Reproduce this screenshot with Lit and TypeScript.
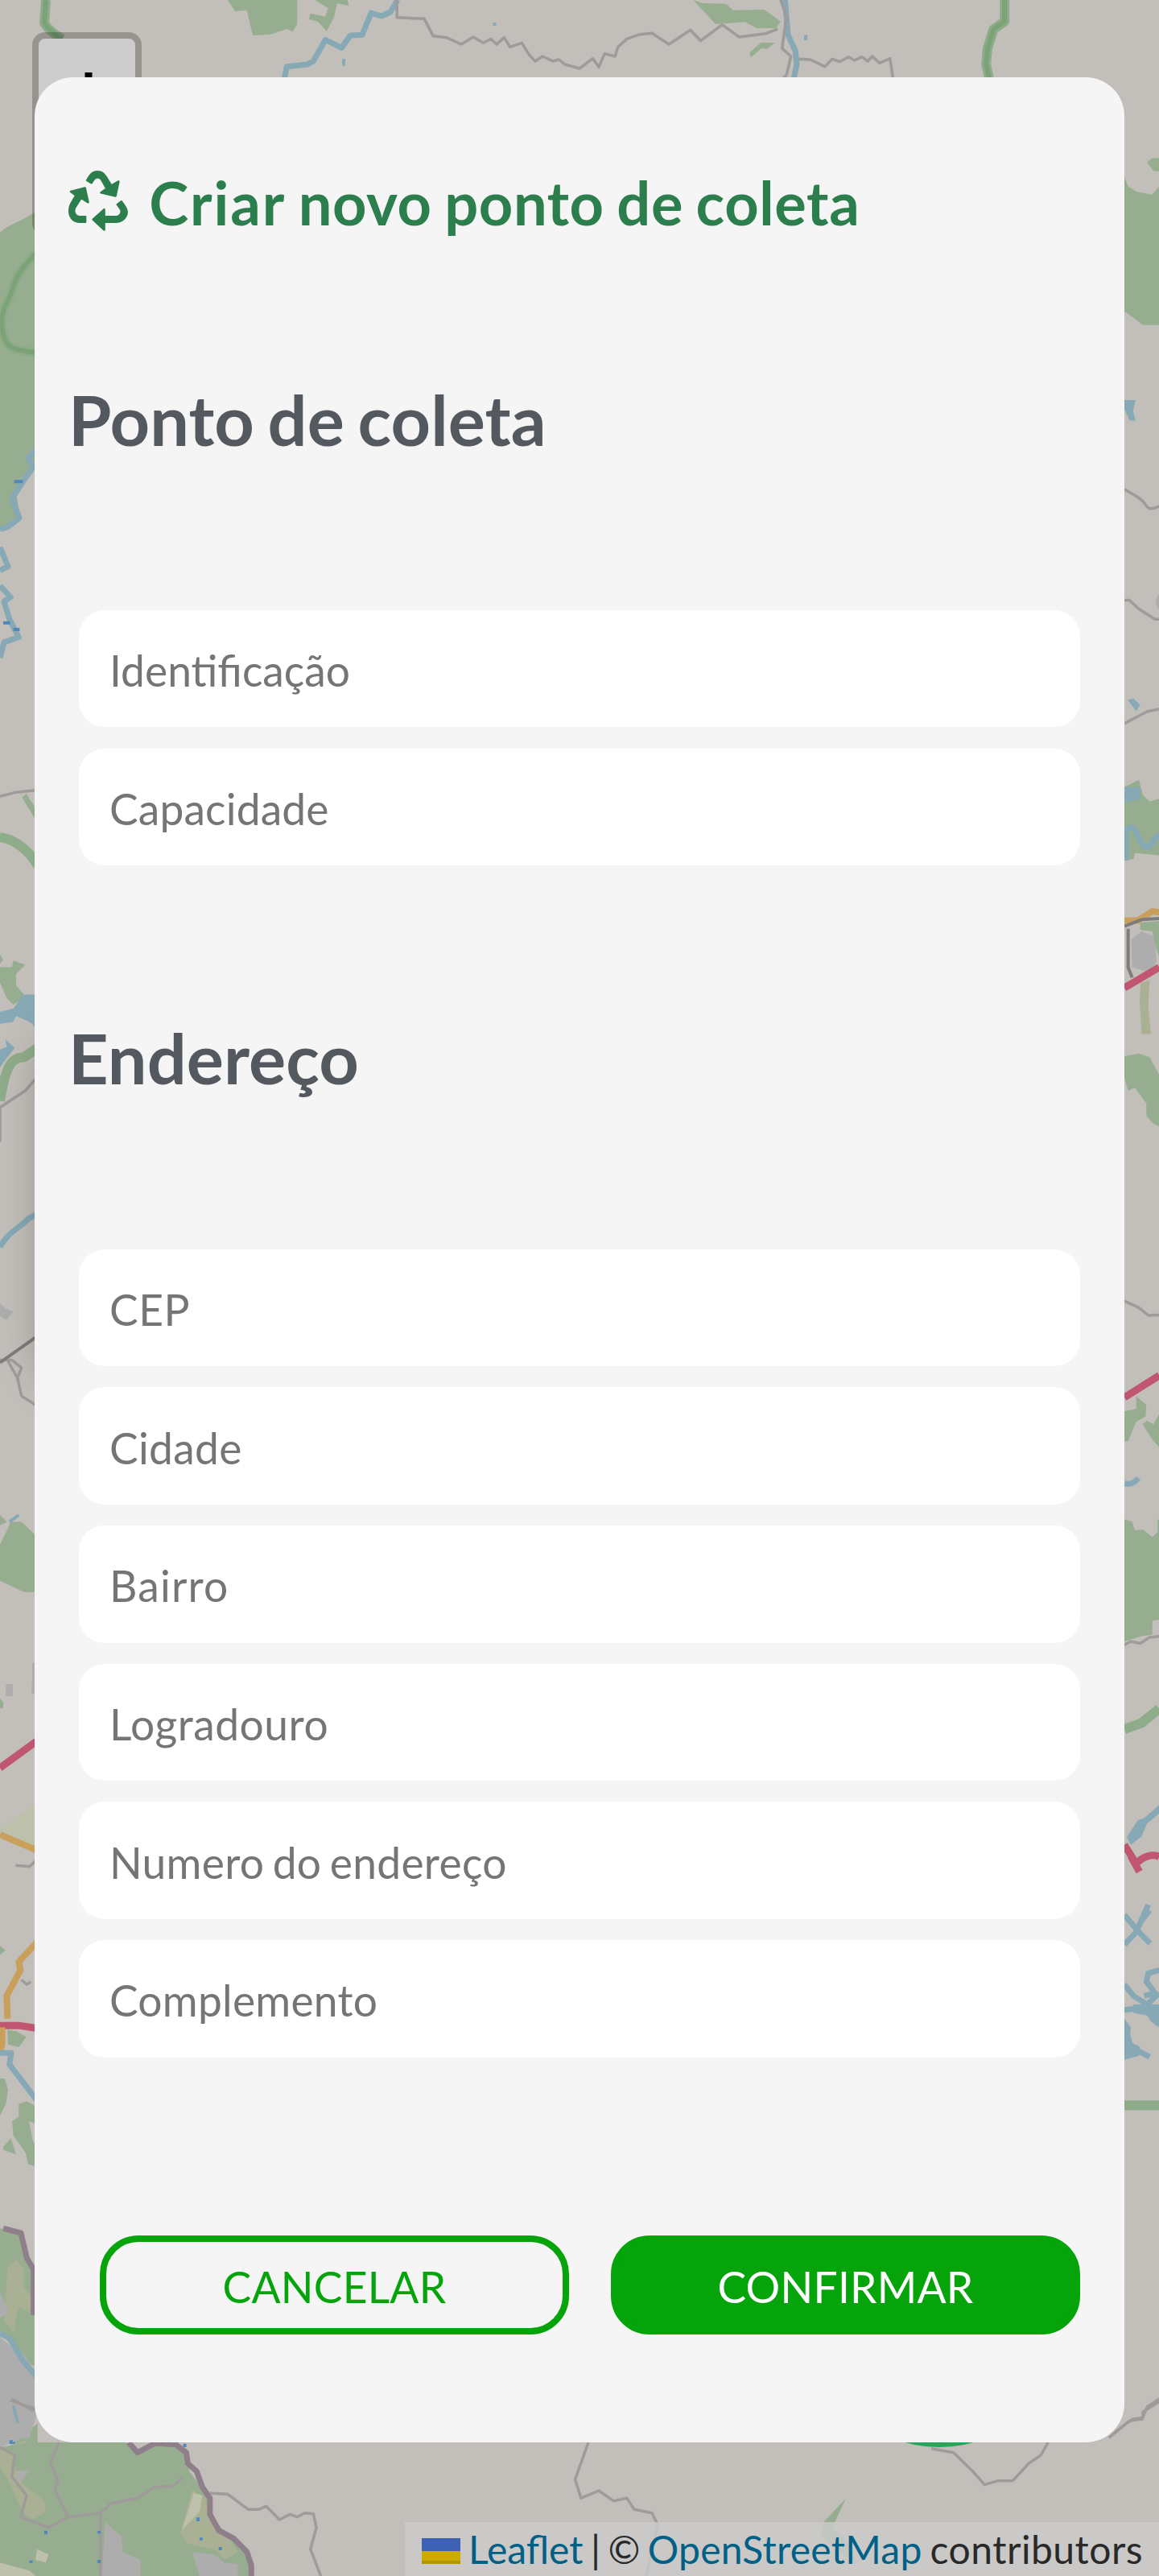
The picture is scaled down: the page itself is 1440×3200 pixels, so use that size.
import { LitElement, html, css, svg } from "lit";
import { customElement, property } from "lit/decorators.js";

@customElement("map-canvas")
export class MapCanvas extends LitElement {
  static styles = css`
    :host { display: block; width: 1440px; height: 3200px; }
    .map { display: block; width: 1440px; height: 3200px; background: #c2beb9; }
    .map path { vector-effect: non-scaling-stroke; }
    .land { fill: #96ad8f; }
    .field { fill: #aab093; }
    .pale { fill: #bdc0ab; }
    .town { fill: #adadad; }
    .lake { fill: #86a9b5; }
    .line { fill: none; stroke-linejoin: round; }
    .river { stroke: #86a9b5; stroke-width: 7; }
    .thin { stroke-width: 4; }
    .spot { stroke: #4f88bd; stroke-width: 4; }
    .border { stroke: #9e9b9a; stroke-width: 3.5; }
    .rail { stroke: #7f7d7b; stroke-width: 4; }
    .trunk { stroke: #8fac8a; stroke-width: 12; }
    .trunk-core { stroke: #7ba377; stroke-width: 6; }
    .red { stroke: #c0566f; stroke-width: 9; }
    .orange { stroke: #c99f5c; stroke-width: 8; }
    .purple { stroke: #8f7f8a; stroke-width: 7; }
  `;

  private north() {
    return svg`<g transform="scale(.9184 .33333)">
      <path class="land" d="M308 0H402V90L396 118L388 108L366 128L342 132L334 38L318 42Z" />
      <path class="land" d="M426 0H470L472 22L456 12L452 62L442 116L430 80L418 72L420 50L440 62L444 30Z" />
      <path class="land" d="M938 0L950 12L982 14L992 38L1034 36L1056 80L1050 104L1024 106L1008 82L968 90Z" />
      <path class="land" d="M1030 158L1048 160L1038 182L1030 180L1016 214L1014 196Z" />
      <path class="line trunk" d="M62 0L60 85Q64 110 84 145" />
      <path class="line trunk-core" d="M62 0L60 85Q64 110 84 145" />
      <path class="line trunk" d="M1359 0V80L1344 110L1336 180L1334 240L1338 290" />
      <path class="line trunk-core" d="M1359 0V80L1344 110L1336 180L1334 240L1338 290" />
      <path class="line river" d="M538 0L528 45L516 60L502 48L490 130L474 132L462 178L440 148L424 228L416 240L388 248L385 290" />
      <path class="line river thin" d="M465 220V245M669 84V96M1090 130V150" />
      <path class="line river" d="M1062 0L1066 130L1076 190L1078 240L1074 290" />
      <path class="line border" d="M537 0V65L574 70L586 134L604 140L624 165L640 138L654 160L664 145L672 165L682 140L690 175L706 160L716 205L724 228L734 210L748 228L756 222L764 240L784 255L802 218L810 250L818 200L832 210L836 175L848 145L866 128L882 124L905 165L934 112L948 152L977 92L1000 138L1036 125L1052 108" />
      <path class="line border" d="M1056 0L1064 60L1058 180L1070 210L1064 280L1060 290M1080 220L1096 222L1116 248L1126 220L1136 230L1148 212L1156 225L1166 212L1174 228L1180 210L1190 235L1204 218L1208 290" />
    </g>`;
  }

  private west() {
    return svg`
      <g transform="translate(0 90) scale(.33333 .63776)">
        <path class="land" d="M0 312C30 295 80 292 140 268V770L80 790L60 820L74 862L40 885L0 890Z" />
        <path class="line trunk" d="M140 350C90 375 60 395 48 420C30 450 2 460 8 495C15 545 60 538 140 547" />
        <path class="line trunk-core" d="M140 350C90 375 60 395 48 420C30 450 2 460 8 495C15 545 60 538 140 547" />
        <path class="line river" d="M140 735L104 750L125 768L88 795L45 830L72 868L30 885L0 890M0 925L30 962L0 970M0 1000L40 1022L15 1030L35 1065L70 1100L15 1110L0 1140" />
        <path class="line spot" d="M53 797H85M12 1072H38M50 1085H73" />
        <path class="line border" d="M0 1410L60 1402L140 1398" />
        <path class="land" d="M82 1412L98 1405L140 1440V1462Z" />
        <path class="line trunk" d="M0 1490C50 1492 110 1515 140 1545" />
      </g>
      <g transform="translate(0 1090) scale(.33333 .63776)">
        <path class="land" d="M0 150L12 160L0 168ZM0 175H45L50 162L94 170L60 188V210L95 232L50 248L25 235L0 205Z" />
        <path class="lake" d="M0 262L50 255L85 228H140V300L120 285L105 280L60 270L48 282L0 285ZM20 315L55 332L20 355L0 370V335L25 330Z" />
        <path class="line trunk" d="M0 435C20 370 40 350 90 350L140 332" />
        <path class="line border" d="M0 448L95 415L140 388M0 448V515M0 940L45 940L80 955L65 975L80 1010L140 1030M28 940L70 980" />
        <path class="line river" d="M0 720C30 690 80 680 105 665L140 655" />
        <path class="town" d="M0 830L20 840L50 845L25 862L0 855Z" />
        <path class="line rail" d="M0 945L140 893" />
        <path class="land" d="M0 1300L40 1255L80 1255L140 1285V1392H90L0 1370ZM0 1242L25 1255L0 1262Z" />
        <path class="line river thin" d="M35 1255L70 1242" />
        <path class="town" d="M120 1530H140V1568H120Z" />
      </g>
      <g transform="translate(0 2090) scale(.33333 .70791)">
        <path class="town" d="M22 3H48V24H22ZM118 0H140V20H118Z" />
        <path class="land" d="M0 28L12 35V45L0 46ZM0 462L20 470L0 478Z" />
        <path class="pale" d="M0 258L95 225L140 215V292L80 275Z" />
        <path class="line red" d="M0 150L140 102M0 602H70L140 607" />
        <path class="line orange" d="M0 267L140 295M140 455L70 490L76 505L25 550L28 590M8 605V635L0 645" />
        <path class="line border thin" d="M58 321L110 323L140 310M80 522L100 530L115 525" />
        <path class="land" d="M28 610L60 612L98 622L70 640L30 635ZM0 695L18 695L30 715L22 740L0 760ZM45 770L70 762V740L100 735L140 745V775L108 770L122 805L140 815V850L105 845L95 825L50 795ZM12 815L40 800L60 828L12 820Z" />
        <path class="line river" d="M0 650H42L35 670L140 735" />
        <path class="land" d="M0 958L75 965L100 1010L128 1040V1200L90 1190L0 1140ZM140 1300V1568H0V1355Z" />
        <path class="field" d="M28 1028L60 1012L90 1030L88 1060L120 1080L110 1105L70 1095L50 1140L15 1120Z" />
        <path class="town" d="M0 1070L35 1105L0 1115ZM0 1150L90 1180L140 1215V1280L110 1325L0 1335Z" />
        <path class="field" d="M0 1345L95 1330L140 1380L135 1470L40 1460L0 1440Z" />
        <path class="line river" d="M0 1143L35 1150L85 1190L140 1220M40 1275L70 1298" />
        <path class="line border" d="M0 1277H20L40 1262L140 1275M0 1342L30 1360L45 1395L102 1430L80 1468L200 1480" />
        <path class="line spot" d="M32 1333H56M167 1491H180" />
        <path class="line purple" d="M12 958L78 966L100 1010L125 1030V1110" />
      </g>`;
  }

  private east() {
    return svg`
      <g transform="translate(1385 90) scale(.33333 .63776)">
        <path class="land" d="M120 175L140 167H166V192H145ZM36 203L50 222L80 232L140 238L166 222V492H105L36 465Z" />
        <path class="lake" d="M36 638H78L68 660L78 678H56L36 655ZM48 1222L70 1220L95 1232L80 1244Z" />
        <path class="line border" d="M36 812C80 825 100 830 115 842C130 855 150 848 166 845M36 1028H55L90 1045L150 1065H166M36 1268L120 1245L166 1240" />
        <path class="town" d="M166 1015Q140 1030 166 1046Z" />
        <path class="land" d="M36 1392L90 1378L105 1408L130 1420L166 1415V1525L75 1520L70 1532L36 1535Z" />
        <path class="lake" d="M36 1392H95V1415L36 1422Z" />
        <path class="line river" d="M42 1535V1475C75 1460 85 1490 105 1505C130 1520 145 1490 166 1485" />
      </g>
      <g transform="translate(1385 1090) scale(.33333 .63776)">
        <path class="town" d="M62 120L100 105L150 115L155 165L130 185L65 175Z" />
        <path class="land" d="M95 88L166 85V155L150 130L140 105L95 102ZM36 348L90 343L130 350L166 385V485L145 480L118 465V440L75 410L50 415L36 390Z" />
        <path class="field" d="M97 205L130 200L125 250L135 305H100L93 240Z" />
        <path class="line orange" d="M36 84H85L140 66L166 68" />
        <path class="line rail" d="M36 95L100 82L166 80M50 100V175L65 195" />
        <path class="line red" d="M36 215L166 175M36 1013L166 970" />
        <path class="line border" d="M36 825L90 838L125 853L166 852M36 1495L60 1488L95 1492L130 1480L166 1478" />
        <path class="land" d="M36 1040L80 1035V1010L118 1028L115 1050L80 1060L50 1098H36ZM104 1065L120 1058L145 1065L166 1045V1110L140 1095ZM36 1250L65 1255L75 1272L105 1270L140 1285L160 1275V1250L166 1252V1445L140 1448V1475L100 1478L36 1488Z" />
        <path class="line river" d="M36 1180Q65 1185 88 1170" />
      </g>
      <g transform="translate(1385 2090) scale(.33333 .70791)">
        <path class="line trunk" d="M36 82L100 71L166 46" />
        <path class="lake" d="M45 272L85 242L110 238L166 215V230L120 248L100 270L60 285Z" />
        <path class="line red" d="M36 285L80 318C105 305 140 300 166 306M60 305L92 332" />
        <path class="line river" d="M36 408L90 438L132 458M36 460L80 438L125 390M100 418L130 400M36 530L70 550L110 562L140 590L166 600M36 575L110 570L166 572M36 600L60 640L130 657M36 655L90 640M166 505L125 510L118 525L150 545L110 550M110 570L166 545" />
        <path class="lake" d="M36 590L60 605L55 630L95 640L90 655L36 662ZM70 565H166V605L130 585L70 580Z" />
        <path class="line trunk" d="M36 742H166" />
        <path class="line border" d="M0 1317L30 1305L65 1293L105 1290V1280L166 1262" />
      </g>`;
  }

  private south() {
    return svg`<g transform="translate(0 2980) scale(.9184 .33333)">
      <path class="land" d="M40 162H170L184 200L210 165H240L256 210V270L284 370L288 440L310 520L334 570L340 660H0V180Z" />
      <path class="town" d="M0 30L14 10L46 45V90L28 150L0 180ZM14 270L40 265L26 320ZM142 460L164 510L166 570L190 600V660H138ZM260 570L290 580L304 610L322 615V660H270Z" />
      <path class="field" d="M0 180L16 200L24 300L60 380L62 420L44 450L30 420L16 330L0 250ZM260 340L278 370L284 440L310 520L322 570L304 600L290 560L254 540L244 500Z" />
      <path class="pale" d="M262 350L274 360L270 420L246 490ZM0 610L40 640L48 660H0ZM50 560L66 580L62 610L48 600Z" />
      <path class="line border" d="M16 0L46 45M0 180L20 210L16 290L36 360L28 440L66 480L92 440L74 340L78 300L68 240L80 162M92 440L136 425L150 390L186 370L208 330L234 325L248 290M136 425V660" />
      <path class="line river thin" d="M18 25L24 90" />
      <path class="line spot" d="M15 154V168M62 491V505M250 167V180M268 442V456M134 492V502M134 600V612M272 517V527M298 552V564M42 602V612" />
      <path class="line purple" d="M174 162L186 200L210 165L238 170L252 200L254 240L266 270L274 330L284 370V430L296 490L316 520L334 570L340 620V660" />
      <path class="line border" d="M284 352L308 355L336 412L350 412L360 400L378 450L392 430L402 440L412 425L424 428L428 480L420 560L434 660" />
      <path class="line border" d="M796 162L778 300L786 370L810 342L830 380L848 370L858 412L882 425L890 470L874 660M1260 185L1290 200L1316 270L1332 320L1350 305L1370 305L1392 240L1408 210L1418 162M1500 145L1528 82L1545 75L1552 30L1568 0" />
      <path class="land" d="M1144 372L1126 480L1150 540L1160 620L1110 510L1114 460Z" />
    </g>`;
  }

  render() {
    return html`<svg class="map" viewBox="0 0 1440 3200" aria-hidden="true">
      ${this.north()}${this.west()}${this.east()}${this.south()}
    </svg>`;
  }
}

interface Field {
  label: string;
  /** Letter spacing in px; zero keeps the ligatures of the label. */
  tracking: number;
}

@customElement("form-section")
export class FormSection extends LitElement {
  @property() heading = "";
  @property({ attribute: false }) fields: Field[] = [];

  static styles = css`
    :host { display: block; }
    .heading {
      margin: 0 0 185.3px;
      padding-left: 41.8px;
      font: 700 86.4px/104px Lato, sans-serif;
      letter-spacing: 0.1px;
      word-spacing: -4.6px;
      color: #54595f;
    }
    .fields {
      display: flex;
      flex-direction: column;
      gap: 26.2px;
      padding: 0 55px 0 54.8px;
    }
    .field {
      display: block;
      box-sizing: border-box;
      width: 100%;
      height: 145.5px;
      margin: 0;
      padding: 10px 38px 7px;
      border: 0;
      border-radius: 32px;
      outline: 0;
      background: #fff;
      color: #333;
      font: 400 53.333px/64px Lato, sans-serif;
      word-spacing: -3.6px;
    }
    .field::placeholder { color: #757575; opacity: 1; }
  `;

  render() {
    return html`
      <h2 class="heading">${this.heading}</h2>
      <div class="fields">
        ${this.fields.map(
          (f) => html`<input
            class="field"
            style="letter-spacing:${f.tracking}px"
            placeholder=${f.label}
            aria-label=${f.label}
          />`
        )}
      </div>
    `;
  }
}

const POINT_FIELDS: Field[] = [
  { label: "Identificação", tracking: 0 },
  { label: "Capacidade", tracking: 0.15 },
];

const ADDRESS_FIELDS: Field[] = [
  { label: "CEP", tracking: 0.6 },
  { label: "Cidade", tracking: 0.3 },
  { label: "Bairro", tracking: 1.2 },
  { label: "Logradouro", tracking: 0.5 },
  { label: "Numero do endereço", tracking: 0.3 },
  { label: "Complemento", tracking: 0.25 },
];

@customElement("app-root")
export class AppRoot extends LitElement {
  static styles = css`
    :host { display: block; font-family: Lato, sans-serif; }
    .screen {
      position: relative;
      box-sizing: border-box;
      width: 1440px;
      height: 3200px;
      padding: 96px 43.2px 0;
      overflow: hidden;
    }
    .backdrop { position: absolute; inset: 0; }
    .zoom {
      position: absolute;
      left: 40px;
      top: 40px;
      box-sizing: border-box;
      width: 136px;
      height: 253px;
      border: 8px solid rgba(0, 0, 0, 0.22);
      border-radius: 16px;
      background: #ccc;
      background-clip: padding-box;
    }
    .plus { display: block; margin: 42px 0 0 40px; width: 44px; height: 44px; }
    .popup {
      position: absolute;
      left: 58px;
      top: 1270px;
      width: 1200px;
      height: 440px;
      border-radius: 48px;
      box-shadow: 0 12px 56px rgba(0, 0, 0, 0.34);
    }
    .add {
      position: absolute;
      left: 1010px;
      top: 2726px;
      width: 314px;
      height: 314px;
      border-radius: 50%;
      background: #26a65b;
    }
    .attribution {
      position: absolute;
      right: 0;
      bottom: 0;
      display: flex;
      align-items: baseline;
      padding: 0 20px 0 21px;
      background: rgba(204, 204, 204, 0.8);
      color: #292929;
      font-size: 48px;
      line-height: 67.2px;
      word-spacing: -2.8px;
      white-space: pre;
    }
    .flag { width: 48px; height: 32px; margin-right: 10px; }
    .link { color: #006086; text-decoration: none; }
    .osm { letter-spacing: 0.25px; }
    .credit { letter-spacing: 0.5px; }
    .dialog {
      position: relative;
      box-sizing: border-box;
      height: 2938px;
      padding-top: 108px;
      border-radius: 48px;
      background: #f5f5f5;
    }
    .title {
      display: flex;
      align-items: center;
      margin: 0 0 168.7px;
      padding-left: 41.8px;
      gap: 26.3px;
      color: #2c7f4c;
      font-size: 74px;
      font-weight: 700;
      line-height: 96px;
      letter-spacing: 0.6px;
      word-spacing: -3px;
    }
    .lead { letter-spacing: 1.9px; }
    .recycle { width: 74px; height: 75px; margin-top: -5px; }
    .second { margin-top: 187.2px; }
    .actions {
      display: grid;
      grid-template-columns: 1fr 1fr;
      gap: 52.4px;
      margin-top: 221.6px;
      padding: 0 55px 0 81px;
    }
    .button {
      box-sizing: border-box;
      height: 122.6px;
      margin: 0;
      padding: 4px 0 0;
      border: 8px solid #06a40b;
      border-radius: 48px;
      background: transparent;
      color: #06a40b;
      font: 400 53.333px/64px Lato, sans-serif;
      letter-spacing: 0.25px;
    }
    .primary { background: #06a40b; color: #fff; }
  `;

  render() {
    return html`
      <main class="screen">
        <map-canvas class="backdrop"></map-canvas>
        <div class="popup"></div>
        <div class="zoom">
          <svg class="plus" viewBox="0 0 44 44"><path d="M17.5 0h9v17.5H44v9H26.5V44h-9V26.5H0v-9h17.5z" /></svg>
        </div>
        <div class="add"></div>
        <div class="attribution"><svg class="flag" viewBox="0 0 12 8"><path fill="#3d62b4" d="M0 0h12v4H0z" /><path fill="#ccaa00" d="M0 4h12v3H0z" /><path fill="#b39600" d="M0 7h12v1H0z" /></svg><a class="link">Leaflet</a><span> | © </span><a class="link osm">OpenStreetMap</a><span class="credit"> contributors</span></div>
        <section class="dialog" role="dialog">
          <h1 class="title">
            <svg class="recycle" viewBox="25 32 74 75" fill="currentColor">
              <path d="M47.5 42.6C50 38.5 53 32 61.3 32C67 32 70.5 35.5 73 39.5L80 51L72 56L65.5 44.5C64 42 63 41.7 61.3 41.7C58.5 41.7 57.5 43.5 54.7 48Q54 49 52.8 48.300L47.300 45Q46.200 44.300 47.500 42.600Z" />
              <path d="M33 62.5L27.5 72C25.8 75.5 25 78 25 82.5C25 91 31 97 39.3 97H46.2Q47.3 97 47.3 95.9V89.100Q47.300 88 46.200 88H39.300C35 88 32 83.500 34.200 78.500L42.500 65.500Z" />
              <path d="M68 88H83.5C88 88 91 83.5 88.6 80L84.8 74.800Q84.100 73.600 85.200 73L90 69.300Q91.200 68.600 92 69.700L95.600 75C98 78.500 98.900 80.500 98.900 83.500C98.900 91 92 97 84 97H68Z" />
              <g stroke="currentColor" stroke-width="2.6" stroke-linejoin="round">
                <path d="M87.4 45.5L83.5 63.5L65.5 59.3L73 54L79.500 50Z" />
                <path d="M28 58L45.6 53.6L49.5 71.3L41 66L34 62.500Z" />
                <path d="M55.6 92.6L69.5 80.2V105.5Z" />
              </g>
            </svg>
            <span><span class="lead">Criar</span> novo ponto de coleta</span>
          </h1>
          <form-section heading="Ponto de coleta" .fields=${POINT_FIELDS}></form-section>
          <form-section class="second" heading="Endereço" .fields=${ADDRESS_FIELDS}></form-section>
          <div class="actions">
            <button class="button">CANCELAR</button>
            <button class="button primary">CONFIRMAR</button>
          </div>
        </section>
      </main>
    `;
  }
}
